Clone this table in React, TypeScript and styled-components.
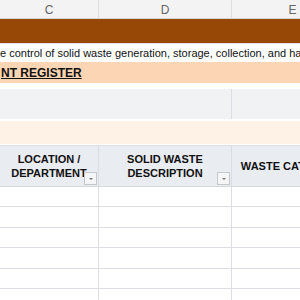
import React from "react";
import styled, { createGlobalStyle } from "styled-components";

const Global = createGlobalStyle`
  html, body { margin: 0; padding: 0; background: #ffffff; }
  body { font-family: "Liberation Sans", Arial, sans-serif; overflow: hidden; }
`;

const Sheet = styled.div`
  width: 300px;
  height: 300px;
  overflow: hidden;
  background: #ffffff;
  display: flex;
  flex-direction: column;
`;

const COLS = "99px 133px 122px";

const ColHeaderBar = styled.div`
  display: grid;
  grid-template-columns: ${COLS};
  height: 18px;
  background: #f3f3f3;
  border-bottom: 1px solid #d6d6d6;
  flex-shrink: 0;
`;

const ColLetter = styled.div`
  display: flex;
  align-items: center;
  justify-content: center;
  font-size: 12px;
  color: #666666;
  border-right: 1px solid #dedede;
  padding-top: 2px;
`;

const Banner = styled.div`
  height: 24px;
  background: #974706;
  flex-shrink: 0;
`;

const IntroRow = styled.div`
  height: 18px;
  border-top: 1px solid #e4e4e4;
  display: flex;
  align-items: center;
  font-size: 11px;
  color: #111111;
  white-space: nowrap;
  overflow: hidden;
  flex-shrink: 0;
`;

const TitleRow = styled.div`
  height: 21px;
  background: #fcd5b4;
  display: flex;
  align-items: center;
  padding-left: 1px;
  font-size: 12px;
  font-weight: 700;
  text-decoration: underline;
  color: #111111;
  white-space: nowrap;
  flex-shrink: 0;
`;

const Gap = styled.div<{ $h: number }>`
  height: ${(p) => p.$h}px;
  flex-shrink: 0;
`;

const BandRow = styled.div<{ $bg: string; $h: number }>`
  display: grid;
  grid-template-columns: 232px 122px;
  height: ${(p) => p.$h}px;
  background: ${(p) => p.$bg};
  flex-shrink: 0;
`;

const BandCell = styled.div<{ $divider?: boolean }>`
  border-right: ${(p) => (p.$divider ? "1px solid #dcdee4" : "none")};
`;

const HeaderRow = styled.div`
  display: grid;
  grid-template-columns: ${COLS};
  height: 40px;
  background: #e9ecf0;
  border-top: 1px solid #dcdee4;
  border-bottom: 1px solid #d5d8de;
  flex-shrink: 0;
`;

const HeaderCell = styled.div`
  position: relative;
  display: flex;
  align-items: center;
  justify-content: center;
  text-align: center;
  font-size: 11px;
  font-weight: 700;
  line-height: 14px;
  color: #111111;
  border-right: 1px solid #d9dce2;
  white-space: nowrap;
`;

const FilterButton = styled.div`
  position: absolute;
  right: 1px;
  bottom: 1px;
  width: 11px;
  height: 11px;
  border: 1px solid #c4c7cc;
  background: #f4f5f7;
  display: flex;
  align-items: center;
  justify-content: center;
`;

const Caret = styled.div`
  width: 0;
  height: 0;
  border-left: 2px solid transparent;
  border-right: 2px solid transparent;
  border-top: 2px solid #777777;
  margin-top: 1px;
`;

const DataRow = styled.div`
  display: grid;
  grid-template-columns: ${COLS};
  height: 20.4px;
  border-bottom: 1px solid #dcdee4;
  box-sizing: border-box;
  flex-shrink: 0;
`;

const DataCell = styled.div`
  border-right: 1px solid #dcdee4;
`;

const Filter = () => (
  <FilterButton>
    <Caret />
  </FilterButton>
);

export default function App() {
  const rows = Array.from({ length: 6 });
  return (
    <>
      <Global />
      <Sheet>
        <ColHeaderBar>
          <ColLetter>C</ColLetter>
          <ColLetter>D</ColLetter>
          <ColLetter>E</ColLetter>
        </ColHeaderBar>
        <Banner />
        <IntroRow>
          e control of solid waste generation, storage, collection, and handling activities.
        </IntroRow>
        <TitleRow>NT REGISTER</TitleRow>
        <Gap $h={6} />
        <BandRow $bg="#f1f2f4" $h={30}>
          <BandCell $divider />
          <BandCell />
        </BandRow>
        <Gap $h={2} />
        <BandRow $bg="#fef2e6" $h={23}>
          <BandCell />
          <BandCell />
        </BandRow>
        <Gap $h={1} />
        <HeaderRow>
          <HeaderCell>
            LOCATION /<br />
            DEPARTMENT
            <Filter />
          </HeaderCell>
          <HeaderCell>
            SOLID WASTE
            <br />
            DESCRIPTION
            <Filter />
          </HeaderCell>
          <HeaderCell>WASTE CATEGORY</HeaderCell>
        </HeaderRow>
        {rows.map((_, i) => (
          <DataRow key={i}>
            <DataCell />
            <DataCell />
            <DataCell />
          </DataRow>
        ))}
      </Sheet>
    </>
  );
}
